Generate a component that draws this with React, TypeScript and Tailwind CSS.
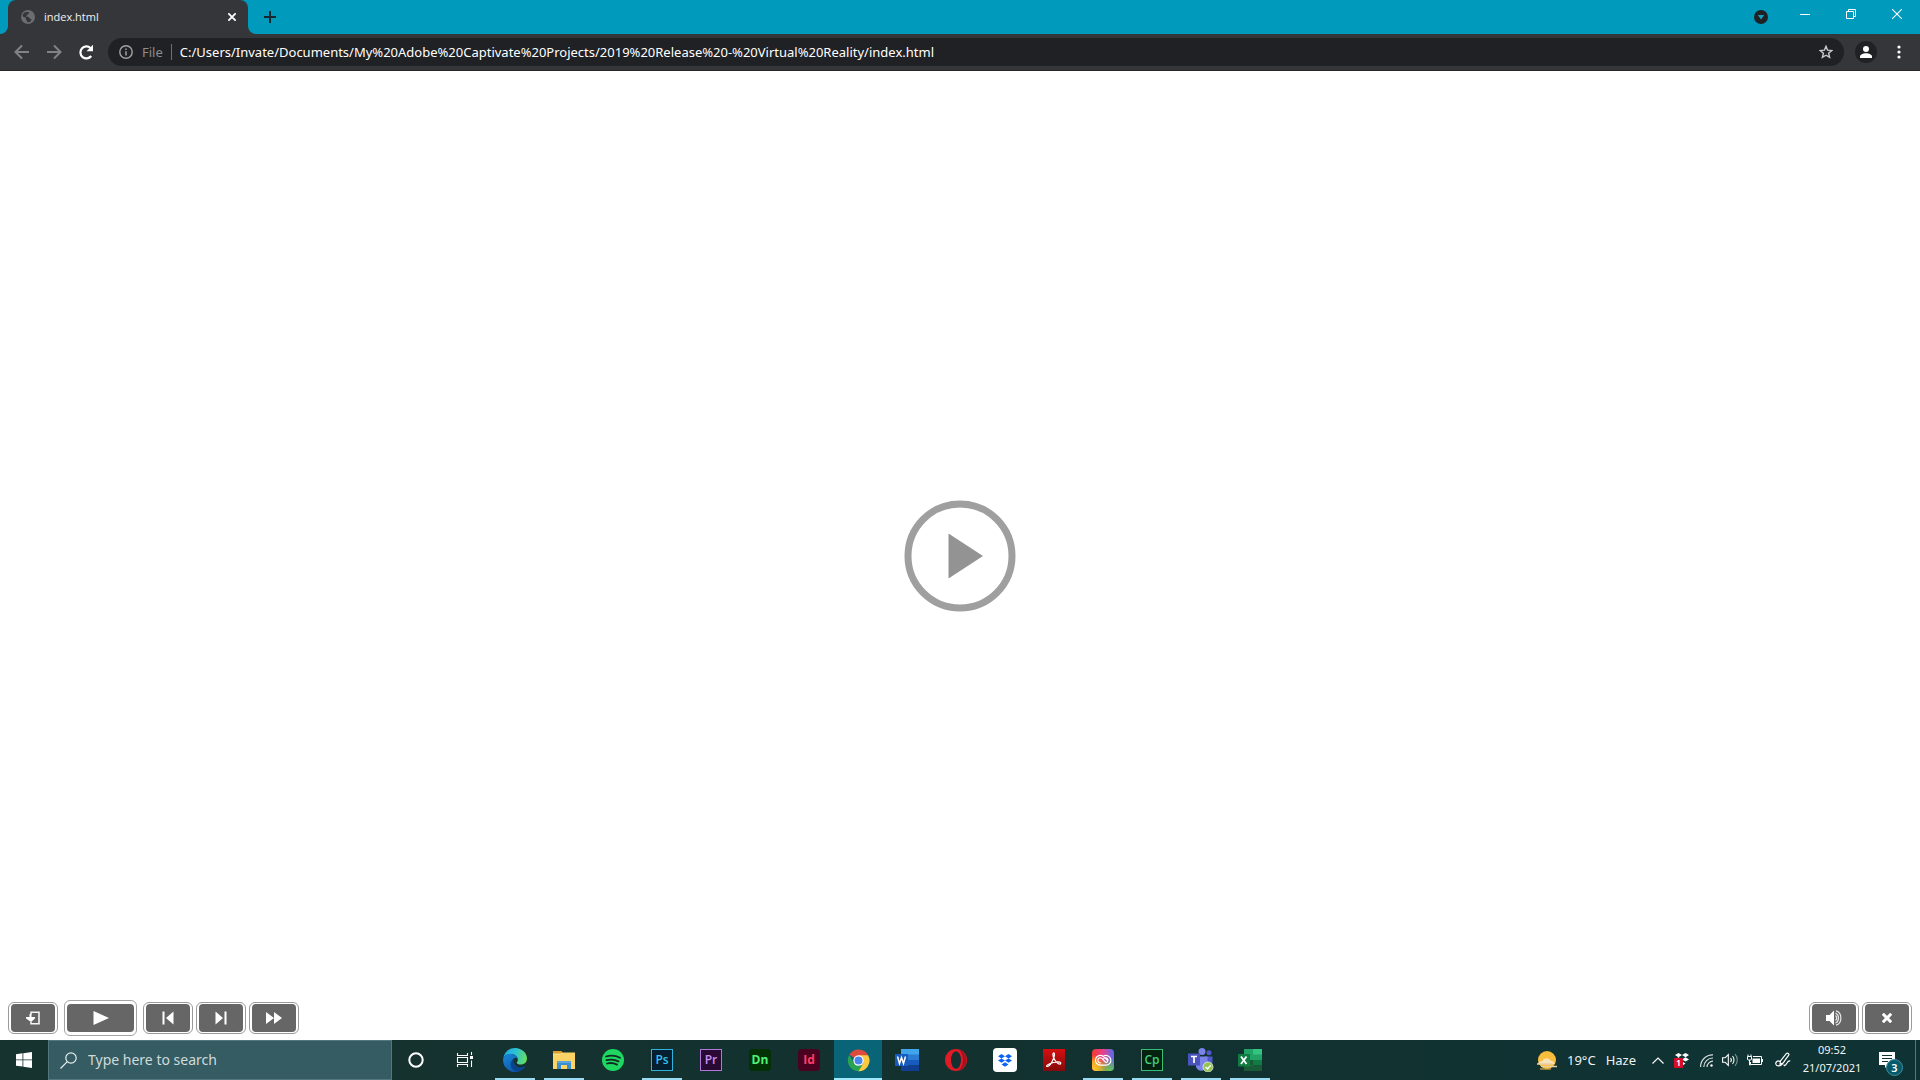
import type { ReactNode } from "react";

function Globe() {
  return (
    <svg viewBox="0 0 14 14" className="size-3.5" aria-hidden="true">
      <circle cx="7" cy="7" r="7" fill="#6a6d71" />
      <path d="M2 4.2c.6-.9 1.5-1.7 2.600-2.100 1.300.2 2.400-.3 3.600.1-.5.900-.1 1.700-1.300 2-.9.300-.6 1.200-1.400 1.500-.8.2-.4 1.200.5 1.100 1.300-.2 2.200.4 2.300 1.300.5 1.200 1.500.5 2.100 1.400.3.500-.4 1.400-1 2C7.800 12.300 7 12.200 6 12c.3-1-.2-1.700-.9-2.300-.6-.6 0-1.600-.7-2.100C3.500 6.900 2.500 7 1.700 6.500c-.1-.8 0-1.600.3-2.300z" fill="#35363a" />
    </svg>
  );
}

function Arrow({ flip = false }: { flip?: boolean }) {
  return (
    <svg viewBox="0 0 16 16" className="size-4" fill="none" stroke="#808286" strokeWidth="2" aria-hidden="true">
      {flip ? <path d="M1 8h13M8 1.500l6.500 6.500L8 14.500" /> : <path d="M15 8H2M8 1.500L1.500 8 8 14.500" />}
    </svg>
  );
}

function BrowserChrome() {
  return (
    <header className="shrink-0 bg-[#35363a]">
      <div className="flex h-[34px] items-stretch bg-[#009abc]">
        <div className="flex w-2 items-end bg-[#35363a]">
          <div className="h-full w-full rounded-br-lg bg-[#009abc]" />
        </div>
        <div className="flex w-60 items-center rounded-t-lg bg-[#35363a] pl-[13px] pr-2">
          <Globe />
          <span className="ml-[9px] grow font-['Open_Sans',sans-serif] text-[11px] text-[#f1f1f1]">index.html</span>
          <button aria-label="Close tab" className="flex size-4 items-center justify-center">
            <svg viewBox="0 0 8 8" className="size-2" stroke="#fff" strokeWidth="1.800" aria-hidden="true">
              <path d="M.3.3l7.400 7.400M7.700.3L.3 7.700" />
            </svg>
          </button>
        </div>
        <div className="flex w-2 items-end bg-[#35363a]">
          <div className="h-full w-full rounded-bl-lg bg-[#009abc]" />
        </div>
        <button aria-label="New tab" className="flex w-7 items-center justify-center">
          <svg viewBox="0 0 12 12" className="size-3" stroke="#16282e" strokeWidth="2" aria-hidden="true">
            <path d="M6 0v12M0 6h12" />
          </svg>
        </button>
        <div className="grow" />
        <button aria-label="Search tabs" className="flex w-[42px] items-center justify-center">
          <svg viewBox="0 0 14 14" className="size-3.5" aria-hidden="true">
            <circle cx="7" cy="7" r="7" fill="#202124" />
            <path d="M3.800 5h6.400L7 9.500z" fill="#11a0bd" />
          </svg>
        </button>
        <div className="flex h-7 text-white">
          <button aria-label="Minimize" className="flex w-[46px] items-center justify-center">
            <svg viewBox="0 0 10 10" className="size-2.5" stroke="currentColor" aria-hidden="true">
              <path d="M0 5.500h10" />
            </svg>
          </button>
          <button aria-label="Restore" className="flex w-[46px] items-center justify-center">
            <svg viewBox="0 0 10 10" className="size-2.5" fill="none" stroke="currentColor" aria-hidden="true">
              <path d="M.5 2.500h7v7h-7zM2.500 2.500v-2h7v7h-2" />
            </svg>
          </button>
          <button aria-label="Close window" className="flex w-[46px] items-center justify-center">
            <svg viewBox="0 0 10 10" className="size-2.5" stroke="currentColor" strokeWidth="1.100" aria-hidden="true">
              <path d="M0 0l10 10M10 0L0 10" />
            </svg>
          </button>
        </div>
      </div>
      <div className="flex h-[37px] items-center border-b border-[#272428] pr-[11px]">
        <button aria-label="Back" className="flex w-8 justify-center pl-3"><Arrow /></button>
        <button aria-label="Forward" className="ml-1.5 flex w-8 justify-center"><Arrow flip /></button>
        <button aria-label="Reload" className="flex w-8 justify-center">
          <svg viewBox="0 0 16 16" className="size-4" aria-hidden="true">
            <path d="M13.200 12A6 6 0 1 1 12.500 4" fill="none" stroke="#fff" strokeWidth="2.200" />
            <path d="M15 .8v6.400H8.500z" fill="#fff" />
          </svg>
        </button>
        <div className="ml-1.5 flex h-7 grow items-center rounded-full bg-[#202124] px-[11px]">
          <button aria-label="Page information" className="flex items-center leading-5 text-[#8a8d91]">
            <svg viewBox="0 0 14 14" className="size-3.5" fill="none" stroke="#a0a3a7" aria-hidden="true">
              <circle cx="7" cy="7" r="6.200" strokeWidth="1.400" />
              <path d="M7 6.200v4.300M7 3.500v1.500" strokeWidth="1.500" />
            </svg>
            <span className="ml-[9px] text-[13px]">File</span>
          </button>
          <span className="mx-2 h-4 w-px bg-[#6d7074]" />
          <input
            aria-label="Address"
            className="min-w-0 grow bg-transparent text-[13px] leading-5 text-white outline-none"
            defaultValue="C:/Users/Invate/Documents/My%20Adobe%20Captivate%20Projects/2019%20Release%20-%20Virtual%20Reality/index.html"
          />
          <button aria-label="Bookmark this page">
            <svg viewBox="0 0 14 14" className="size-3.5" fill="none" stroke="#c8cacd" strokeWidth="1.400" aria-hidden="true">
              <path d="M7 1.300l1.600 3.900 4.200.3-3.200 2.700 1 4.200L7 10.200l-3.600 2.200 1-4.200L1.200 5.500l4.200-.3z" />
            </svg>
          </button>
        </div>
        <button aria-label="Profile" className="ml-[11px] flex size-[22px] items-center justify-center rounded-full bg-[#202124]">
          <svg viewBox="0 0 12 12" className="size-3" fill="#fff" aria-hidden="true">
            <circle cx="6" cy="3" r="3" />
            <path d="M0 12v-1.500C0 8.500 3 7.200 6 7.200s6 1.300 6 3.300V12z" />
          </svg>
        </button>
        <button aria-label="Menu" className="ml-3 flex w-5 justify-center">
          <svg viewBox="0 0 4 14" className="h-3.5 w-1" fill="#fff" aria-hidden="true">
            <circle cx="2" cy="2" r="1.600" /><circle cx="2" cy="7" r="1.600" /><circle cx="2" cy="12" r="1.600" />
          </svg>
        </button>
      </div>
    </header>
  );
}

function PlayerButton({ label, wide = false, children }: { label: string; wide?: boolean; children: ReactNode }) {
  return (
    <button
      aria-label={label}
      className={
        wide
          ? "mx-[3px] flex h-9 w-[73px] rounded-md border border-[#a3a3a3] bg-white px-0.5 py-[3px]"
          : "flex h-8 w-[50px] rounded-md border border-[#999] bg-white px-0.5 py-px"
      }
    >
      <span className="flex h-full w-full items-center justify-center rounded-[4px] bg-[#666]">{children}</span>
    </button>
  );
}

function PlayerBar() {
  return (
    <div className="flex shrink-0 items-center gap-[3px] px-2 pb-1">
      <PlayerButton label="Exit">
        <svg viewBox="0 0 14 14" className="size-3.5" aria-hidden="true">
          <path d="M5 3.500V1.300h8v11.400H5V11" fill="none" stroke="#f4f4f4" strokeWidth="1.600" />
          <path d="M0 6h3.500V3h2v3H9v1.500L5 11 0 7.500z" fill="#fff" />
        </svg>
      </PlayerButton>
      <PlayerButton label="Play" wide>
        <svg viewBox="0 0 16 14" className="h-3.5 w-4" fill="#fff" aria-hidden="true"><path d="M.5 0L16 7 .5 14z" /></svg>
      </PlayerButton>
      <PlayerButton label="Previous">
        <svg viewBox="0 0 12 14" className="h-3.5 w-3" fill="#fff" aria-hidden="true"><path d="M.5.500h2v13h-2zM11.500.5v13L4 7z" /></svg>
      </PlayerButton>
      <PlayerButton label="Next">
        <svg viewBox="0 0 12 14" className="h-3.5 w-3" fill="#fff" aria-hidden="true"><path d="M9.500.500h2v13h-2zM.5.500v13L8 7z" /></svg>
      </PlayerButton>
      <PlayerButton label="Fast forward">
        <svg viewBox="0 0 16 12" className="h-3 w-4" fill="#fff" aria-hidden="true"><path d="M0 0l8 6-8 6zM8 0l8 6-8 6z" /></svg>
      </PlayerButton>
      <div className="grow" />
      <PlayerButton label="Mute">
        <svg viewBox="0 0 16 16" className="size-4" aria-hidden="true">
          <path d="M0 5h3.500L8 .5v15L3.500 11H0z" fill="#fff" />
          <path d="M9.500 5.500c1.500 1.200 1.500 3.800 0 5M9.500 3c4 1.800 4 8.200 0 10M10 .8c6.500 1.700 6.500 12.700 0 14.400" fill="none" stroke="#e8e8e8" strokeWidth="1.200" />
        </svg>
      </PlayerButton>
      <PlayerButton label="Close">
        <svg viewBox="0 0 10 10" className="size-2.5" stroke="#fff" strokeWidth="3" aria-hidden="true"><path d="M.8.8l8.400 8.400M9.200.8L.8 9.200" /></svg>
      </PlayerButton>
    </div>
  );
}

function Task({ label, open = false, active = false, children }: { label: string; open?: boolean; active?: boolean; children: ReactNode }) {
  return (
    <button
      aria-label={label}
      className={
        active
          ? "relative flex h-full w-12 items-center justify-center bg-[#096477]"
          : "relative flex h-full w-12 items-center justify-center"
      }
    >
      {children}
      {(open || active) && (
        <span className={active ? "absolute inset-x-0 bottom-0 h-0.5 bg-[#9fe8fb]" : "absolute inset-x-1 bottom-0 h-0.5 bg-[#99dcf4]"} />
      )}
    </button>
  );
}

function Tile({ className, children }: { className: string; children: ReactNode }) {
  return <span className={`flex size-[22px] items-center justify-center font-['Open_Sans',sans-serif] text-xs leading-3 ${className}`}>{children}</span>;
}

function Taskbar() {
  return (
    <footer className="flex h-10 shrink-0 items-stretch bg-linear-to-r from-[#17332f] via-[#12312f] to-[#0f3334] text-white">
      <button aria-label="Start" className="flex w-12 items-center justify-center">
        <svg viewBox="0 0 16 16" className="size-4" fill="#fff" aria-hidden="true">
          <path d="M0 2.200l6.500-.9v6.200H0zM7.300 1.200L16 0v7.500H7.300zM0 8.300h6.500v6.300L0 13.700zM7.300 8.300H16V16l-8.700-1.200z" />
        </svg>
      </button>
      <label className="flex w-[344px] items-center border border-[#54777c] bg-[#355c62] pl-[11px]">
        <svg viewBox="0 0 17 17" className="size-[17px] shrink-0" fill="none" stroke="#e8eeee" strokeWidth="1.200" aria-hidden="true">
          <circle cx="11" cy="6" r="5.200" /><path d="M7.300 9.700L.5 16.500" />
        </svg>
        <input aria-label="Search" placeholder="Type here to search" className="ml-[11px] min-w-0 grow bg-transparent text-sm leading-5 outline-none placeholder:text-[#d0dadb]" />
      </label>
      <Task label="Cortana">
        <svg viewBox="0 0 16 16" className="size-4" fill="none" aria-hidden="true"><circle cx="8" cy="8" r="6.700" stroke="#fff" strokeWidth="2" /></svg>
      </Task>
      <Task label="Task View">
        <svg viewBox="0 0 17 16" className="h-4 w-[17px]" fill="none" stroke="#fff" aria-hidden="true">
          <path d="M1.500 1v2.500h10V1M1.500 15v-2.500h10V15M1.500 5.500h10v5h-10zM15.500 0v3M15.500 8.500V15" strokeWidth="1.100" />
          <path d="M14 4h3v3h-3z" fill="#fff" stroke="none" />
        </svg>
      </Task>
      <div className="ml-[3px] flex gap-px">
        <Task label="Microsoft Edge" open>
          <svg viewBox="0 0 24 24" className="size-6" aria-hidden="true">
            <defs>
              <linearGradient id="edgeTop" x1="0" x2="1" y1=".3" y2=".5"><stop offset="0" stopColor="#1ea7e4" /><stop offset=".5" stopColor="#2cc3d2" /><stop offset="1" stopColor="#66dc61" /></linearGradient>
              <linearGradient id="edgeLow" x1="0" x2=".6" y1="0" y2="1"><stop offset="0" stopColor="#1589d8" /><stop offset="1" stopColor="#1257a8" /></linearGradient>
            </defs>
            <path d="M.2 10.500C1 4.500 6 0 12 0c7 0 12 5.200 12 10.500 0 3.800-2.800 6-6 6-2.500 0-4.300-.8-4.300-1.800 0-.7 1.500-1.400 1.100-3.700C14.300 8.200 11.500 6 8 6 3.800 6 1 8 .2 10.500z" fill="url(#edgeTop)" />
            <path d="M.1 11C1 7.500 4.500 5.500 8 6c4 .4 6.300 2.600 6.700 4.500-1-.8-2.300-.8-3.300-.3C8 12 7.500 16.500 11 20c2 2 5 2.800 7.500 2.100A12 12 0 0 1 .1 11z" fill="url(#edgeLow)" />
            <path d="M11.400 10.200c-1.800 3.300.4 8.300 5.200 9 2.200.3 4-.3 5.200-1 .5-.3.900.1.600.6a12 12 0 0 1-8 5C8 23 4.500 15 11.400 10.200z" fill="#0b448e" />
          </svg>
        </Task>
        <Task label="File Explorer" open>
          <svg viewBox="0 0 22 18" className="h-[18px] w-[22px]" aria-hidden="true">
            <path d="M0 0h8.500l1.500 2H21v4H0z" fill="#e09e22" />
            <path d="M0 3h8l2-1.500h12V18H0z" fill="#fbd465" />
            <path d="M0 3h8l1.500-1" stroke="#f5e3a0" fill="none" />
            <path d="M4 18v-8h14v8h-4v-4H8v4z" fill="#3b8fd0" />
            <path d="M4 10h14v2H4z" fill="#57a6dd" />
          </svg>
        </Task>
        <Task label="Spotify">
          <svg viewBox="0 0 22 22" className="size-[22px]" aria-hidden="true">
            <circle cx="11" cy="11" r="11" fill="#1ed760" />
            <path d="M4 7.500c4.500-1.400 10-1 14 1.200M4.500 11.200c4-1.100 8.500-.7 12 1.200M5 14.500c3.500-.9 7-.5 10 1.100" stroke="#122b22" strokeWidth="1.800" strokeLinecap="round" fill="none" />
          </svg>
        </Task>
        <Task label="Photoshop" open><Tile className="border border-[#2fb3de] bg-[#051e30] font-semibold text-[#35c3ee]">Ps</Tile></Task>
        <Task label="Premiere Pro"><Tile className="border border-[#b077d6] bg-[#290a35] font-semibold text-[#ce8df0]">Pr</Tile></Task>
        <Task label="Dimension"><Tile className="rounded bg-[#043006] font-bold text-[#4df377]">Dn</Tile></Task>
        <Task label="InDesign"><Tile className="rounded bg-[#49021f] font-bold text-[#ff3d68]">Id</Tile></Task>
        <Task label="Google Chrome" active>
          <svg viewBox="0 0 24 24" className="size-[23px]" aria-hidden="true">
            <path d="M12 12L2.500 6A11.200 11.200 0 0 1 22 6.500z" fill="#dd4b3e" />
            <path d="M12 6.500h10a11.200 11.200 0 0 1-10.500 16.700L17 14z" fill="#fcca3f" />
            <path d="M2.400 6.300L7.200 14.700 12 17.500l4-.5-4.200 6.200A11.200 11.200 0 0 1 2.400 6.300z" fill="#2aa350" />
            <circle cx="12" cy="12" r="5.400" fill="#fff" /><circle cx="12" cy="12" r="4.200" fill="#4a86ee" />
          </svg>
        </Task>
        <Task label="Word">
          <svg viewBox="0 0 24 22" className="h-[22px] w-6" aria-hidden="true">
            <path d="M6 0h18v6H6z" fill="#41a5ee" /><path d="M6 5.500h18V11H6z" fill="#2b7cd3" /><path d="M6 11h18v5.500H6z" fill="#185abd" /><path d="M6 16.500h18V22H6z" fill="#103f91" />
            <path d="M0 5h13v12H0z" fill="#185abd" />
            <path d="M2.500 7.500L4.500 14.500l2-6 2 6 2-7" fill="none" stroke="#fff" strokeWidth="1.500" />
          </svg>
        </Task>
        <Task label="Opera">
          <svg viewBox="0 0 22 22" className="size-[22px]" aria-hidden="true">
            <ellipse cx="11" cy="11" rx="11" ry="11" fill="#e01b28" />
            <path d="M13 .3A11 11 0 0 1 13 21.700c3-2 5-6 5-10.700S16 2.300 13 .3z" fill="#a80f1c" />
            <ellipse cx="11" cy="11" rx="5" ry="8.800" fill="#14302f" />
          </svg>
        </Task>
        <Task label="Dropbox">
          <span className="flex size-6 items-center justify-center rounded bg-white">
            <svg viewBox="0 0 14 13" className="h-[13px] w-3.5" fill="#0d62f5" aria-hidden="true">
              <path d="M3.500 0L7 2.200 3.500 4.400 0 2.200zM10.500 0L14 2.200l-3.500 2.200L7 2.200zM3.500 4.400L7 6.600 3.500 8.800 0 6.600zM10.500 4.400L14 6.600l-3.500 2.200L7 6.600zM7 8.300l3.500 2.200L7 12.700l-3.500-2.200z" />
            </svg>
          </span>
        </Task>
        <Task label="Acrobat Reader">
          <Tile className="bg-linear-to-b from-[#d40f10] to-[#850a0a]">
            <svg viewBox="0 0 18 18" className="size-[18px]" fill="none" stroke="#fff" strokeWidth="1.200" aria-hidden="true">
              <path d="M8.700 7C7.500 4 7.800 1.800 8.700 1.800S9.900 4 8.700 7C7.300 10.500 4.500 15.500 2.500 15.500s-.8-2.300 6-4 7.500.3 7.200 1.200c-.7 1.300-5-.9-7-5.700z" />
            </svg>
          </Tile>
        </Task>
        <Task label="Creative Cloud" open>
          <svg viewBox="0 0 22 22" className="size-[22px]" aria-hidden="true">
            <defs>
              <linearGradient id="ccBase" x1="0" x2="1" y1="0" y2="0"><stop offset="0" stopColor="#f2392f" /><stop offset=".5" stopColor="#e8408c" /><stop offset="1" stopColor="#4f6ff0" /></linearGradient>
              <radialGradient id="ccYellow" cx="0" cy="1" r=".75"><stop offset="0" stopColor="#fbd52b" /><stop offset=".6" stopColor="#f9a02a" /><stop offset="1" stopColor="#f9802a" stopOpacity="0" /></radialGradient>
              <radialGradient id="ccGreen" cx=".8" cy="1" r=".6"><stop offset="0" stopColor="#5fcf45" /><stop offset="1" stopColor="#5fcf45" stopOpacity="0" /></radialGradient>
            </defs>
            <rect width="22" height="22" rx="4" fill="url(#ccBase)" />
            <rect width="22" height="22" rx="4" fill="url(#ccYellow)" />
            <rect width="22" height="22" rx="4" fill="url(#ccGreen)" />
            <path d="M8.300 16.200a4.900 4.900 0 1 1 3-8.800l4.300 4.200M13.800 16.200H8.300M12 6.800a4.900 4.900 0 1 1 2 9.400M8.300 13.800a2.500 2.500 0 1 1 1.500-4.500l4.200 4.300M11.800 9.400a2.500 2.500 0 1 1 2.200 4.300" fill="none" stroke="#fff" strokeWidth="1.200" strokeLinecap="round" />
          </svg>
        </Task>
        <Task label="Captivate" open><Tile className="border border-[#37bf72] bg-[#05210f] font-semibold text-[#40cf7e]">Cp</Tile></Task>
        <Task label="Teams" open>
          <svg viewBox="0 0 26 24" className="h-6 w-[26px]" aria-hidden="true">
            <circle cx="14" cy="3.500" r="3.500" fill="#7b83eb" /><circle cx="21" cy="4.800" r="2.500" fill="#5059c9" />
            <path d="M17 8.500h7.500v7a4 4 0 0 1-7 2z" fill="#5059c9" /><path d="M8 8.500h11.500V17a6 6 0 0 1-11.500 2z" fill="#7b83eb" />
            <path d="M0 5.500h12v12H0z" fill="#4b53bc" /><path d="M3 8.500h6M6 8.500v6.500" stroke="#fff" strokeWidth="1.700" />
            <circle cx="20" cy="19" r="5" fill="#92c353" stroke="#e8f3dc" strokeWidth=".8" /><path d="M17.500 19l2 2 3.300-3.700" stroke="#fff" strokeWidth="1.400" fill="none" />
          </svg>
        </Task>
        <Task label="Excel" open>
          <svg viewBox="0 0 24 22" className="h-[22px] w-6" aria-hidden="true">
            <path d="M6 0h9v22H6z" fill="#21a366" /><path d="M15 0h9v6h-9z" fill="#33c481" /><path d="M15 5.500h9V11h-9z" fill="#21a366" /><path d="M6 11h9v5.500H6z" fill="#185c37" /><path d="M15 11h9v5.500h-9z" fill="#107c41" /><path d="M6 16.500h18V22H6z" fill="#185c37" />
            <path d="M0 5h12v12.500H0z" fill="#107c41" /><path d="M3 7.500l5.500 7.500M8.500 7.500L3 15" stroke="#fff" strokeWidth="1.800" />
          </svg>
        </Task>
      </div>
      <div className="grow" />
      <button className="flex items-center text-[13px] leading-5 text-[#edf1f1]">
        <svg viewBox="0 0 20 19" className="mr-2.5 h-[19px] w-5" aria-hidden="true">
          <circle cx="10" cy="9" r="9" fill="#f9bd3c" />
          <path d="M1 13a3 3 0 0 1 4-2.600 5 5 0 0 1 9-.4 3 3 0 0 1 3.500 3z" fill="#f6e3bd" />
          <path d="M0 13h15M5 15.500h15" stroke="#e9d0a1" strokeWidth="1.600" strokeLinecap="round" /><path d="M3 18h11" stroke="#fbbf44" />
        </svg>
        <span>19°C</span><span className="ml-2.5">Haze</span>
      </button>
      <div className="ml-2.5 flex">
        <button aria-label="Show hidden icons" className="flex w-6 items-center justify-center">
          <svg viewBox="0 0 12 7" className="h-[7px] w-3" fill="none" stroke="#fff" strokeWidth="1.200" aria-hidden="true"><path d="M.5 6.500L6 1l5.500 5.500" /></svg>
        </button>
        <button aria-label="Dropbox, 1 notification" className="relative flex w-6 items-center justify-center">
          <svg viewBox="0 0 16 14" className="h-3.5 w-4" fill="#fff" aria-hidden="true"><path d="M4.500 0L8 2 4.500 4.200 1 2zM11.500 0L15 2l-3.500 2.200L8 2zM4.500 4.200L8 6.400 4.500 8.600 1 6.400zM11.500 4.200L15 6.400l-3.500 2.200L8 6.400zM8 8.600l3.500 2L8 13z" /></svg>
          <span className="absolute bottom-3 left-1 flex h-2.5 w-[9px] items-center justify-center rounded-[1px] bg-[#d90d2b] text-[8px] leading-none font-bold">1</span>
        </button>
        <button aria-label="Network" className="flex w-[25px] items-center justify-center">
          <svg viewBox="0 0 13 13" className="size-[13px]" fill="none" stroke="#d5dddd" strokeWidth="1.200" aria-hidden="true">
            <path d="M.6 13A12 12 0 0 1 13 .8M3.800 13A9 9 0 0 1 13 4M7 13a6 6 0 0 1 6-5.800" /><circle cx="11.500" cy="11.500" r="1.200" fill="#fff" stroke="none" />
          </svg>
        </button>
        <button aria-label="Volume" className="flex w-[22px] items-center justify-center">
          <svg viewBox="0 0 16 14" className="h-3.5 w-4" fill="none" stroke="#fff" strokeWidth="1.100" aria-hidden="true">
            <path d="M.6 4.800h2.500L6.300 1.500v11L3.100 9.200H.6zM8.500 5c.9 1 .9 3 0 4M10.500 3.200c2 2 2 5.600 0 7.600" /><path d="M13 1.200c3 3 3 8.600 0 11.600" stroke="#819697" />
          </svg>
        </button>
        <button aria-label="Battery" className="flex w-7 items-center justify-center">
          <svg viewBox="0 0 16 13" className="h-[13px] w-4" fill="none" stroke="#fff" aria-hidden="true">
            <path d="M6 2.500h8.500v8h-11V8M15.500 5v3M1 .5v2M4 .5v2M.5 2.500h4V5a1 1 0 0 1-1 1h-2a1 1 0 0 1-1-1zM2.500 6v5h1" /><path d="M5.500 4.500h7.500v4.500H5.500z" fill="#fff" stroke="none" />
          </svg>
        </button>
        <button aria-label="Windows Ink Workspace" className="flex w-7 items-center justify-center">
          <svg viewBox="0 0 16 16" className="size-4" fill="none" stroke="#fff" strokeWidth="1.200" aria-hidden="true">
            <path d="M5 12L5.500 9 11.500 1.500c1-1 3 .5 2.200 1.700L8 11zM5 9.500C2.500 8 .5 10 .8 12c.4 2.500 4 2.500 6 .5s3-3.500 4-5.500M9 12.500c0 2 1.500 1 3-1.500.8-1.500 2-2.500 3.300-2" />
          </svg>
        </button>
      </div>
      <button className="flex w-[70px] flex-col items-center pt-px text-[11px] leading-[18px] text-[#f2f5f5]">
        <span>09:52</span><span>21/07/2021</span>
      </button>
      <button aria-label="3 notifications" className="relative flex w-12 items-center justify-center pr-2">
        <svg viewBox="0 0 16 16" className="size-4" aria-hidden="true">
          <path d="M0 0h16v13H9l-3 3v-3H0z" fill="#fff" /><path d="M3 3.500h10M3 6.500h10M3 9.500h6" stroke="#0f3334" strokeWidth="1.100" />
        </svg>
        <span className="absolute bottom-1 right-3 flex size-[17px] items-center justify-center rounded-full border border-[#3f8d9c] bg-[#075a6c] text-[11px] leading-none font-semibold">3</span>
      </button>
      <button aria-label="Show desktop" className="w-[5px] border-l border-[#5d7677]" />
    </footer>
  );
}

export default function App() {
  return (
    <div className="flex h-screen flex-col overflow-hidden bg-white font-['Noto_Sans','Open_Sans',sans-serif]">
      <BrowserChrome />
      <main className="flex min-h-0 grow flex-col">
        <div className="flex min-h-0 grow items-center justify-center pt-10">
          <button aria-label="Start presentation">
            <svg viewBox="0 0 112 112" className="size-28" aria-hidden="true">
              <circle cx="56" cy="56" r="52" fill="none" stroke="#9f9f9f" strokeWidth="7" />
              <path d="M44.500 33.500L79 56 44.500 78.500z" fill="#939393" />
            </svg>
          </button>
        </div>
        <PlayerBar />
      </main>
      <Taskbar />
    </div>
  );
}
